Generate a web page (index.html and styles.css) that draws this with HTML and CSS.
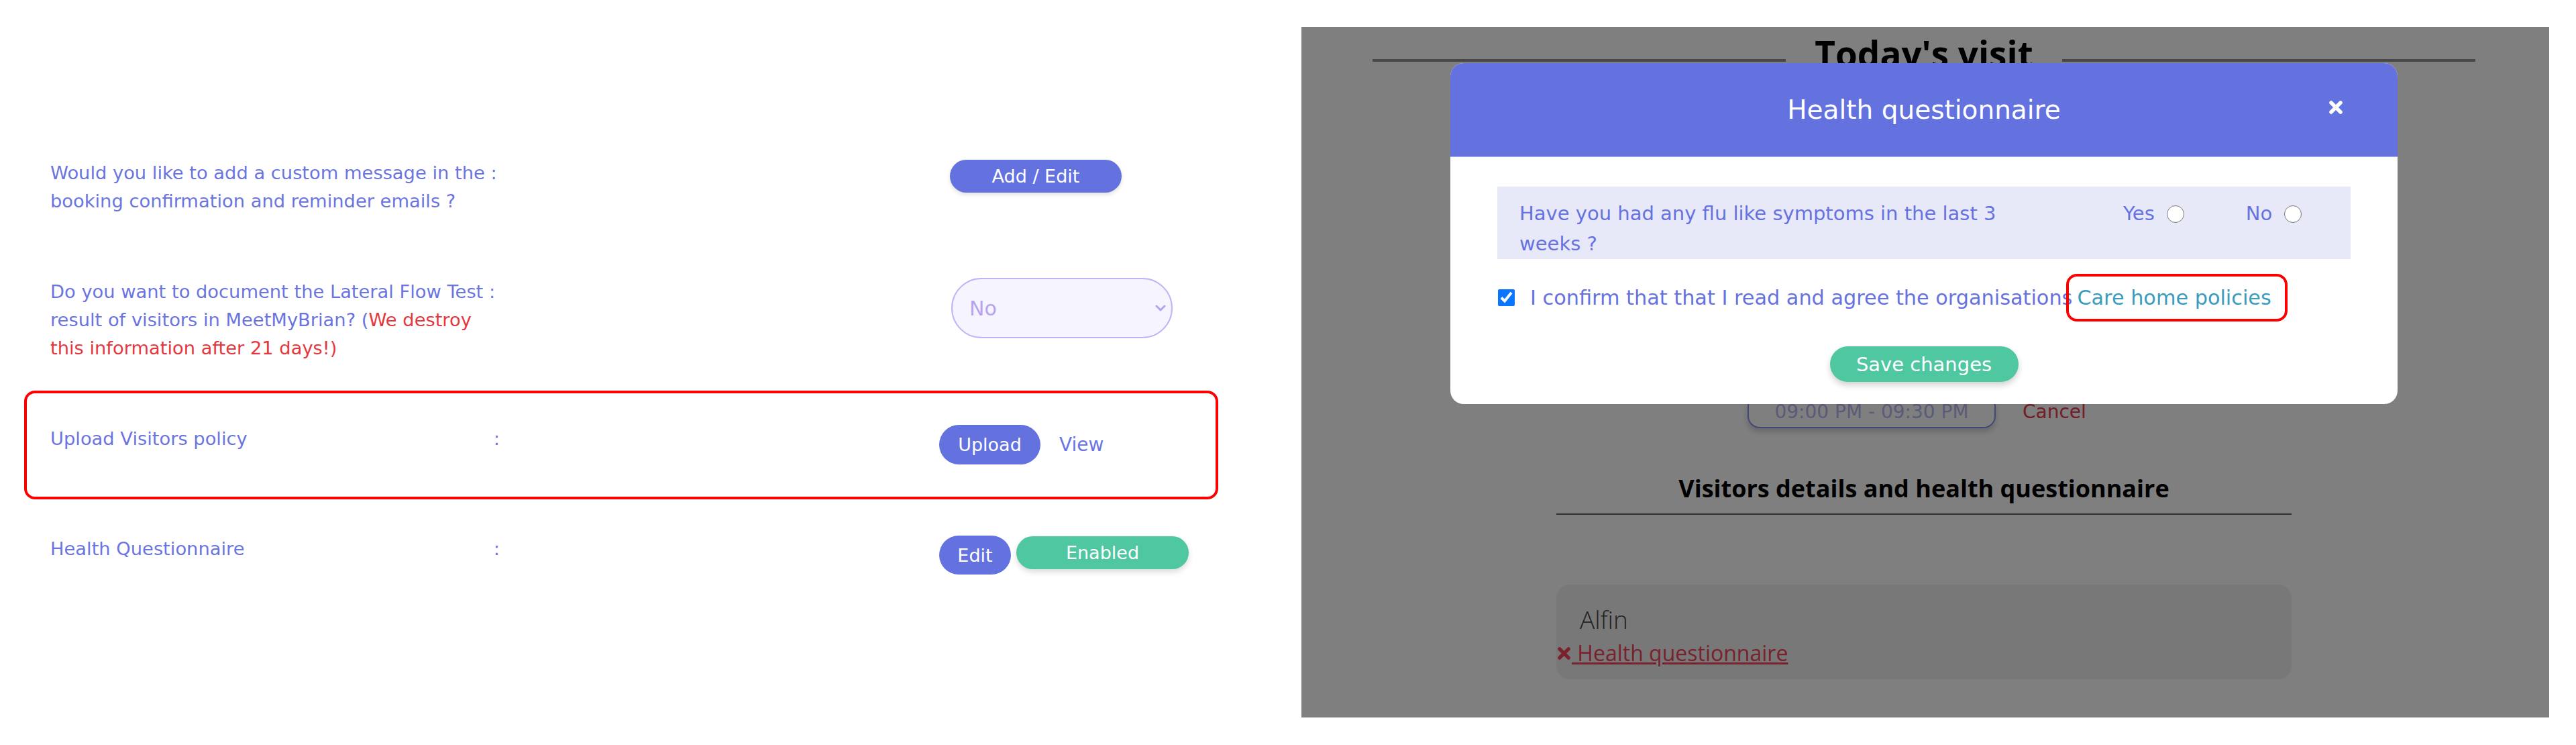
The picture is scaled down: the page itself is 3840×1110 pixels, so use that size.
FILE: index.html
```html
<!DOCTYPE html>
<html lang="en">
<head>
<meta charset="utf-8">
<title>Settings and health questionnaire</title>
<link rel="stylesheet" href="styles.css">
</head>
<body>
<section class="settings">
  <div class="row r1">
    <div class="label">
      <div>Would you like to add a custom message in the :</div>
      <div>booking confirmation and reminder emails ?</div>
    </div>
    <div></div>
    <div class="actions">
      <button class="btn btn-add">Add / Edit</button>
    </div>
  </div>

  <div class="row r2">
    <div class="label">
      <div>Do you want to document the Lateral Flow Test :</div>
      <div>result of visitors in MeetMyBrian? (<span class="warn">We destroy</span></div>
      <div><span class="warn">this information after 21 days!)</span></div>
    </div>
    <div></div>
    <div class="actions">
      <div class="select-wrap">
        <select class="select"><option>No</option><option>Yes</option></select>
        <svg class="chev" viewBox="0 0 16 10" width="16" height="10"><path d="M2 2 L8 8 L14 2" fill="none" stroke="#b6a2f0" stroke-width="3" stroke-linecap="round" stroke-linejoin="round"/></svg>
      </div>
    </div>
  </div>

  <div class="row boxed">
    <div class="label split"><span>Upload Visitors policy</span><span>:</span></div>
    <div></div>
    <div class="actions gap-view">
      <button class="btn btn-upload">Upload</button>
      <a class="view-link">View</a>
    </div>
  </div>

  <div class="row r4">
    <div class="label split"><span>Health Questionnaire</span><span>:</span></div>
    <div></div>
    <div class="actions gap-small">
      <button class="btn btn-edit">Edit</button>
      <button class="btn btn-enabled">Enabled</button>
    </div>
  </div>
</section>

<section class="preview">
  <div class="page">
    <div class="visit-head">
      <div class="rule"></div>
      <h1 class="visit-title">Today's visit</h1>
      <div class="rule"></div>
    </div>

    <div class="slot">
      <div class="slot-time">09:00 PM - 09:30 PM</div>
      <a class="slot-cancel">Cancel</a>
    </div>

    <div class="visitors">
      <h2 class="visitors-title">Visitors details and health questionnaire</h2>
      <div class="visitors-rule"></div>
      <div class="card">
        <div class="card-name">Alfin</div>
        <a class="card-link"><svg class="xicon" viewBox="0 0 24 24" width="23" height="23"><path d="M5 5 L19 19 M19 5 L5 19" stroke="currentColor" stroke-width="5.5" stroke-linecap="round"/></svg><span class="u"> Health questionnaire</span></a>
      </div>
    </div>
  </div>

  <div class="backdrop"></div>

  <div class="modal">
    <div class="modal-head">
      <h3 class="modal-title">Health questionnaire</h3>
      <button class="close" aria-label="Close"><svg viewBox="0 0 24 24" width="24" height="24"><path d="M5 5 L19 19 M19 5 L5 19" stroke="#fff" stroke-width="5.5" stroke-linecap="round"/></svg></button>
    </div>
    <div class="modal-body">
      <div class="question">
        <div class="q-text">
          <div>Have you had any flu like symptoms in the last 3</div>
          <div>weeks ?</div>
        </div>
        <div class="q-options">
          <label class="opt">Yes <input type="radio" name="flu"></label>
          <label class="opt">No <input type="radio" name="flu"></label>
        </div>
      </div>
      <div class="confirm">
        <input type="checkbox" class="check" checked>
        <span class="confirm-text">I confirm that that I read and agree the organisations</span>
        <a class="policy-link">Care home policies</a>
      </div>
      <button class="btn btn-save">Save changes</button>
    </div>
  </div>
</section>
</body>
</html>
```
FILE: styles.css
```css
* { box-sizing: border-box; }
html, body { margin: 0; padding: 0; }
body {
  width: 3840px;
  height: 1110px;
  background: #fff;
  display: flex;
  align-items: flex-start;
  font-family: "DejaVu Sans", sans-serif;
  overflow: hidden;
}

/* ---------- left settings ---------- */
.settings {
  width: 1940px;
  flex: none;
  padding: 237px 0 0 36px;
}
.row {
  width: 1780px;
  display: grid;
  grid-template-columns: 670px 655px auto;
  align-items: start;
  padding-left: 39px;
}
.r2 { margin-top: 93px; }
.boxed {
  margin-top: 42px;
  border: 4px solid #ff0000;
  border-radius: 16px;
  padding: 47px 0 48px 35px;
}
.r4 { margin-top: 53px; }
.label {
  font-size: 27.3px;
  line-height: 42px;
  color: #6b75e1;
  white-space: nowrap;
}
.label.split { display: flex; justify-content: space-between; }
.warn { color: #e4383f; }
.actions { display: flex; align-items: flex-start; }
.gap-view { align-items: center; gap: 28px; }
.gap-small { gap: 8px; }

.btn {
  display: flex;
  align-items: center;
  justify-content: center;
  border: none;
  border-radius: 999px;
  background: #6472e0;
  color: #fff;
  font-family: "DejaVu Sans", sans-serif;
  font-size: 27px;
  padding: 0;
  white-space: nowrap;
}
.btn-add { width: 256px; height: 49px; margin: 1px 0 0 16px; box-shadow: 0 3px 6px rgba(0,0,0,.12); }
.btn-upload { width: 151px; height: 59px; }
.btn-edit { width: 107px; height: 58px; margin-top: 1px; }
.btn-enabled { width: 257px; height: 49px; margin-top: 2px; background: #4fc7a1; box-shadow: 0 4px 8px rgba(0,0,0,.15); }
.view-link { font-size: 28px; color: #6b75e1; }

.select-wrap { position: relative; margin-left: 18px; width: 330px; height: 90px; }
.select {
  appearance: none;
  -webkit-appearance: none;
  width: 330px;
  height: 90px;
  border: 2px solid #c2b3f6;
  border-radius: 45px;
  background: #f6f4ff;
  padding: 0 0 0 25px;
  font-family: "DejaVu Sans", sans-serif;
  font-size: 30px;
  color: #b6a3ef;
  outline: none;
}
.chev { position: absolute; left: 304px; top: 40px; }

/* ---------- right preview ---------- */
.preview {
  position: relative;
  flex: none;
  width: 1860px;
  height: 1029px;
  margin-top: 40px;
  background: #fff;
  overflow: hidden;
  font-family: "Open Sans", sans-serif;
}
.page { width: 1750px; padding: 10px 0 0 106px; }
.visit-head {
  display: grid;
  grid-template-columns: 616px 1fr 616px;
  height: 60px;
}
.visit-head .rule { height: 4px; margin-top: 38px; background: #909090; }
.visit-title {
  margin: 0;
  text-align: center;
  font-size: 53px;
  font-weight: 700;
  line-height: 60px;
  color: #000;
  white-space: nowrap;
}
.slot {
  display: flex;
  align-items: center;
  gap: 40px;
  height: 50px;
  margin-top: 478px;
  padding-left: 559px;
}
.slot-time {
  width: 370px;
  height: 50px;
  border: 2px solid #858df0;
  border-radius: 18px;
  display: flex;
  align-items: center;
  justify-content: center;
  font-family: "DejaVu Sans", sans-serif;
  font-size: 28px;
  color: #b3b6f2;
  box-shadow: 0 5px 10px rgba(0,0,0,.2);
}
.slot-cancel { font-family: "DejaVu Sans", sans-serif; font-size: 28px; color: #e63a4f; }

.visitors { width: 1096px; margin: 0 auto; }
.visitors-title {
  margin: 66px 0 0;
  text-align: center;
  font-size: 36px;
  font-weight: 700;
  line-height: 48px;
  color: #000;
  white-space: nowrap;
}
.visitors-rule { margin-top: 13px; height: 2px; background: #5a6268; }
.card {
  margin-top: 104px;
  height: 141px;
  border-radius: 20px;
  background: #f0f0f0;
  padding-top: 27px;
}
.card-name {
  padding-left: 35px;
  font-size: 37px;
  font-weight: 300;
  line-height: 50px;
  color: #444;
}
.card-link {
  margin-top: 5px;
  display: flex;
  align-items: center;
  font-size: 32px;
  line-height: 40px;
  color: #f0445a;
  white-space: pre;
}
.card-link .u { text-decoration: underline; }
.xicon { flex: none; }

.backdrop { position: absolute; inset: 0; background: rgba(0,0,0,.5); }

.modal {
  position: absolute;
  left: 222px;
  top: 54px;
  width: 1412px;
  height: 508px;
  background: #fff;
  border-radius: 20px;
  overflow: hidden;
}
.modal-head {
  position: relative;
  height: 140px;
  background: #6472e0;
  border-bottom: 1px solid #a5adf2;
  display: flex;
  align-items: center;
  justify-content: center;
}
.modal-title {
  margin: 0;
  font-family: "DejaVu Sans", sans-serif;
  font-size: 39px;
  font-weight: 400;
  color: #fff;
}
.close {
  position: absolute;
  left: 1308px;
  top: 53px;
  width: 24px;
  height: 28px;
  padding: 0;
  border: none;
  background: none;
}
.modal-body { padding: 44px 70px 33px; font-family: "DejaVu Sans", sans-serif; }
.question {
  height: 108px;
  background: #e8e9f8;
  padding: 18px 0 0 33px;
  display: flex;
  align-items: flex-start;
}
.q-text {
  width: 900px;
  flex: none;
  font-size: 29px;
  line-height: 45px;
  color: #6672e0;
  white-space: nowrap;
}
.q-options { display: flex; gap: 92px; font-size: 29px; line-height: 45px; color: #6672e0; }
.opt { display: flex; align-items: center; gap: 18px; }
.opt input { width: 26px; height: 26px; margin: 0; }
.confirm {
  margin-top: 22px;
  height: 71px;
  display: flex;
  align-items: center;
  font-size: 30.3px;
  color: #6672e0;
  white-space: nowrap;
}
.check { width: 25px; height: 25px; margin: 0 23px 0 1px; accent-color: #0a75ff; flex: none; }
.policy-link {
  margin-left: -9px;
  height: 71px;
  display: flex;
  align-items: center;
  padding: 0 20px 0 12px;
  border: 4px solid #ff0000;
  border-radius: 16px;
  color: #3a9bbd;
}
.btn-save {
  width: 281px;
  height: 53px;
  margin: 37px auto 0;
  background: #4fc7a1;
  font-size: 29px;
  box-shadow: 0 5px 10px rgba(0,0,0,.18);
}
```
